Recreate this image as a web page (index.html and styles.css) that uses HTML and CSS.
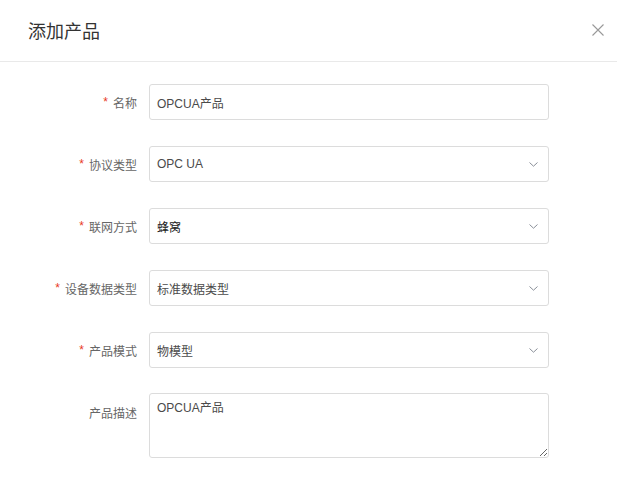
FILE: index.html
```html
<!DOCTYPE html>
<html lang="zh">
<head>
<meta charset="utf-8">
<link rel="stylesheet" href="styles.css">
</head>
<body>
<div class="dialog">
  <div class="header">
    <span class="title">添加产品</span>
    <span class="close">
      <svg width="12" height="12" viewBox="0 0 12 12"><path d="M0.5 0.5L11.5 11.5M11.5 0.5L0.5 11.5" stroke="#999" stroke-width="1.1" fill="none"/></svg>
    </span>
  </div>
  <div class="form">
    <div class="row">
      <label class="label"><span class="req">*</span>名称</label>
      <div class="control input"><span class="value">OPCUA产品</span></div>
    </div>
    <div class="row">
      <label class="label"><span class="req">*</span>协议类型</label>
      <div class="control select"><span class="value">OPC UA</span>
        <svg class="arrow" width="9" height="5" viewBox="0 0 9 5"><path d="M0.5 0.5L4.5 4.2L8.5 0.5" stroke="#8a8f99" stroke-width="1" fill="none"/></svg>
      </div>
    </div>
    <div class="row">
      <label class="label"><span class="req">*</span>联网方式</label>
      <div class="control select"><span class="value dark">蜂窝</span>
        <svg class="arrow" width="9" height="5" viewBox="0 0 9 5"><path d="M0.5 0.5L4.5 4.2L8.5 0.5" stroke="#8a8f99" stroke-width="1" fill="none"/></svg>
      </div>
    </div>
    <div class="row">
      <label class="label"><span class="req">*</span>设备数据类型</label>
      <div class="control select"><span class="value">标准数据类型</span>
        <svg class="arrow" width="9" height="5" viewBox="0 0 9 5"><path d="M0.5 0.5L4.5 4.2L8.5 0.5" stroke="#8a8f99" stroke-width="1" fill="none"/></svg>
      </div>
    </div>
    <div class="row">
      <label class="label"><span class="req">*</span>产品模式</label>
      <div class="control select"><span class="value">物模型</span>
        <svg class="arrow" width="9" height="5" viewBox="0 0 9 5"><path d="M0.5 0.5L4.5 4.2L8.5 0.5" stroke="#8a8f99" stroke-width="1" fill="none"/></svg>
      </div>
    </div>
    <div class="row top">
      <label class="label">产品描述</label>
      <textarea class="textarea">OPCUA产品</textarea>
    </div>
  </div>
</div>
</body>
</html>
```
FILE: styles.css
```css
html, body {
  margin: 0;
  padding: 0;
  background: #fff;
}
body {
  font-family: "Liberation Sans", "Noto Sans CJK SC", sans-serif;
  color: #333;
}
.dialog {
  width: 617px;
}
.header {
  height: 62px;
  border-bottom: 1px solid #e9e9e9;
  display: flex;
  align-items: center;
  justify-content: space-between;
  padding: 0 13px 0 28px;
  box-sizing: border-box;
}
.title {
  font-size: 18px;
  color: #333;
  font-family: "Noto Sans CJK SC", sans-serif;
  line-height: 1;
  margin-top: -1px;
}
.close {
  display: flex;
  width: 12px;
  height: 12px;
  margin-top: -1px;
}
.form {
  padding-top: 22px;
  display: flex;
  flex-direction: column;
  gap: 26px;
}
.row {
  display: flex;
  align-items: center;
  height: 36px;
}
.row.top {
  align-items: flex-start;
  height: auto;
  margin-top: -1px;
}
.label {
  width: 137px;
  height: 36px;
  margin-right: 12px;
  display: flex;
  align-items: center;
  justify-content: flex-end;
  font-size: 12px;
  color: #666;
  font-family: "Noto Sans CJK SC", sans-serif;
  white-space: nowrap;
}
.row.top .label {
  height: 18px;
  padding-top: 10px;
}
.req {
  color: #e8391d;
  margin-right: 5px;
  font-family: "Liberation Sans", sans-serif;
}
.control {
  width: 400px;
  height: 36px;
  box-sizing: border-box;
  border: 1px solid #dcdcdc;
  border-radius: 3px;
  display: flex;
  align-items: center;
  justify-content: space-between;
  padding: 0 10px 0 7px;
}
.value {
  font-size: 12px;
  color: #4a4a4a;
  font-family: "Liberation Sans", "Noto Sans CJK SC", sans-serif;
}
.value.dark {
  color: #222;
}
.arrow {
  display: block;
}
.textarea {
  display: block;
  width: 400px;
  height: 65px;
  box-sizing: border-box;
  border: 1px solid #dcdcdc;
  border-radius: 3px;
  padding: 5px 7px;
  margin: 0;
  font-size: 12px;
  line-height: 18px;
  color: #4a4a4a;
  font-family: "Liberation Sans", "Noto Sans CJK SC", sans-serif;
  resize: both;
  outline: none;
}
```
